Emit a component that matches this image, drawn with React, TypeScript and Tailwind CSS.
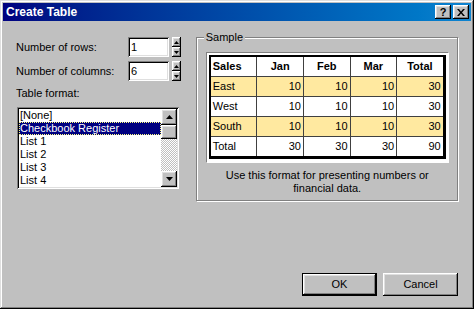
import React from 'react';

const raised =
  'shadow-[inset_-1px_-1px_0_#000,inset_1px_1px_0_#fff,inset_-2px_-2px_0_#808080,inset_2px_2px_0_#dfdfdf]';
const sunken =
  'shadow-[inset_1px_1px_0_#808080,inset_-1px_-1px_0_#fff,inset_2px_2px_0_#000,inset_-2px_-2px_0_#dfdfdf]';

const Arrow = ({ up, w = 7 }: { up?: boolean; w?: number }) => (
  <svg width={w} height={Math.ceil(w / 2)} viewBox={`0 0 ${w} ${Math.ceil(w / 2)}`}>
    {up ? (
      <polygon points={`0,${Math.ceil(w / 2)} ${w},${Math.ceil(w / 2)} ${w / 2},0`} fill="#000" />
    ) : (
      <polygon points={`0,0 ${w},0 ${w / 2},${Math.ceil(w / 2)}`} fill="#000" />
    )}
  </svg>
);

const Spinner = ({ label, value }: { label: string; value: string }) => (
  <div className="flex items-center h-[20px]">
    <span className="w-[112px]">{label}</span>
    <div className={`w-[41px] h-[20px] bg-white ${sunken} pl-[3px] flex items-center`}>{value}</div>
    <div className="ml-[3px] w-[9px] h-[20px] flex flex-col">
      <div className={`h-[10px] bg-[#c0c0c0] ${raised} flex items-center justify-center`}>
        <Arrow up w={5} />
      </div>
      <div className={`h-[10px] bg-[#c0c0c0] ${raised} flex items-center justify-center`}>
        <Arrow w={5} />
      </div>
    </div>
  </div>
);

const formats = ['[None]', 'Checkbook Register', 'List 1', 'List 2', 'List 3', 'List 4'];

const rows = [
  { name: 'East', v: ['10', '10', '10', '30'], hi: true },
  { name: 'West', v: ['10', '10', '10', '30'], hi: false },
  { name: 'South', v: ['10', '10', '10', '30'], hi: true },
  { name: 'Total', v: ['30', '30', '30', '90'], hi: false },
];

export default function App() {
  return (
    <div
      className="w-[474px] h-[309px] bg-[#c0c0c0] p-[3px] flex flex-col text-[11px] text-black shadow-[inset_-1px_-1px_0_#000,inset_1px_1px_0_#dfdfdf,inset_-2px_-2px_0_#808080,inset_2px_2px_0_#fff]"
      style={{ fontFamily: '"Liberation Sans", Arial, sans-serif' }}
    >
      {/* title bar */}
      <div className="h-[18px] bg-linear-to-r from-[#000080] to-[#1084d0] flex items-center pl-[3px] pr-[2px]">
        <span className="text-white font-bold text-[12px] flex-1">Create Table</span>
        <div className={`w-[16px] h-[14px] bg-[#c0c0c0] ${raised} flex items-center justify-center font-bold text-[11px] leading-none`}>
          ?
        </div>
        <div className={`ml-[2px] w-[16px] h-[14px] bg-[#c0c0c0] ${raised} flex items-center justify-center`}>
          <svg width="8" height="7" viewBox="0 0 8 7">
            <path d="M0 0h2l2 2.5L6 0h2L5 3.5 8 7H6L4 4.5 2 7H0l3-3.5z" fill="#000" />
          </svg>
        </div>
      </div>

      {/* body */}
      <div className="flex px-[13px]">
        <div className="w-[181px] pt-[16px] flex flex-col">
          <Spinner label="Number of rows:" value="1" />
          <div className="mt-[4px]">
            <Spinner label="Number of columns:" value="6" />
          </div>
          <div className="mt-[6px] leading-[13px]">Table format:</div>
          <div className={`mt-[7px] ml-[1px] w-[162px] h-[82px] bg-white ${sunken} p-[2px] flex`}>
            <div className="flex-1 flex flex-col">
              {formats.map((f, i) => (
                <div
                  key={f}
                  className={`h-[13px] leading-[13px] pl-[1px] ${
                    i === 1 ? 'bg-[#000080] text-white outline-1 outline-dotted outline-[#ffff80] -outline-offset-1' : ''
                  }`}
                >
                  {f}
                </div>
              ))}
            </div>
            <div className="w-[16px] flex flex-col">
              <div className={`h-[16px] bg-[#c0c0c0] ${raised} flex items-center justify-center`}>
                <Arrow up />
              </div>
              <div className={`h-[14px] bg-[#c0c0c0] ${raised}`} />
              <div className="flex-1 bg-[repeating-conic-gradient(#c0c0c0_0_25%,#fff_0_50%)] bg-[length:2px_2px]" />
              <div className={`h-[16px] bg-[#c0c0c0] ${raised} flex items-center justify-center`}>
                <Arrow />
              </div>
            </div>
          </div>
        </div>

        {/* sample group */}
        <div className="relative mt-[16px] w-[264px] h-[164px] border border-[#808080] shadow-[inset_1px_1px_0_#fff,1px_1px_0_#fff] pl-[9px] pt-[14px]">
          <span className="absolute -top-[7px] left-[7px] bg-[#c0c0c0] px-[2px] leading-[13px]">Sample</span>
          <div className="w-[243px] h-[111px] bg-white border border-t-[#808080] border-l-[#808080] border-r-white border-b-white p-[2px]">
            <div className="bg-[#404040] border-t-2 border-l-2 border-r-[3px] border-b-[3px] border-black grid grid-cols-5 gap-px">
              {['Sales', 'Jan', 'Feb', 'Mar', 'Total'].map((h, i) => (
                <div
                  key={h}
                  className={`h-[19px] leading-[19px] bg-white font-bold ${i === 0 ? 'pl-[2px]' : 'text-center'}`}
                >
                  {h}
                </div>
              ))}
              {rows.map((r) => (
                <React.Fragment key={r.name}>
                  <div className={`h-[19px] leading-[19px] pl-[2px] ${r.hi ? 'bg-[#ffe9a0]' : 'bg-white'}`}>{r.name}</div>
                  {r.v.map((v, j) => (
                    <div
                      key={j}
                      className={`h-[19px] leading-[19px] text-right pr-[2px] ${r.hi ? 'bg-[#ffe9a0]' : 'bg-white'}`}
                    >
                      {v}
                    </div>
                  ))}
                </React.Fragment>
              ))}
            </div>
          </div>
          <div className="mt-[6px] w-[243px] text-center leading-[13px]">
            Use this format for presenting numbers or
            <br />
            financial data.
          </div>
        </div>
      </div>

      {/* buttons */}
      <div className="flex-1" />
      <div className="flex justify-end gap-[6px] pr-[13px] pb-[10px]">
        <div className="w-[75px] h-[23px] border border-black">
          <div className={`w-full h-full bg-[#c0c0c0] ${raised} flex items-center justify-center`}>OK</div>
        </div>
        <div className={`w-[75px] h-[23px] bg-[#c0c0c0] ${raised} flex items-center justify-center`}>Cancel</div>
      </div>
    </div>
  );
}
